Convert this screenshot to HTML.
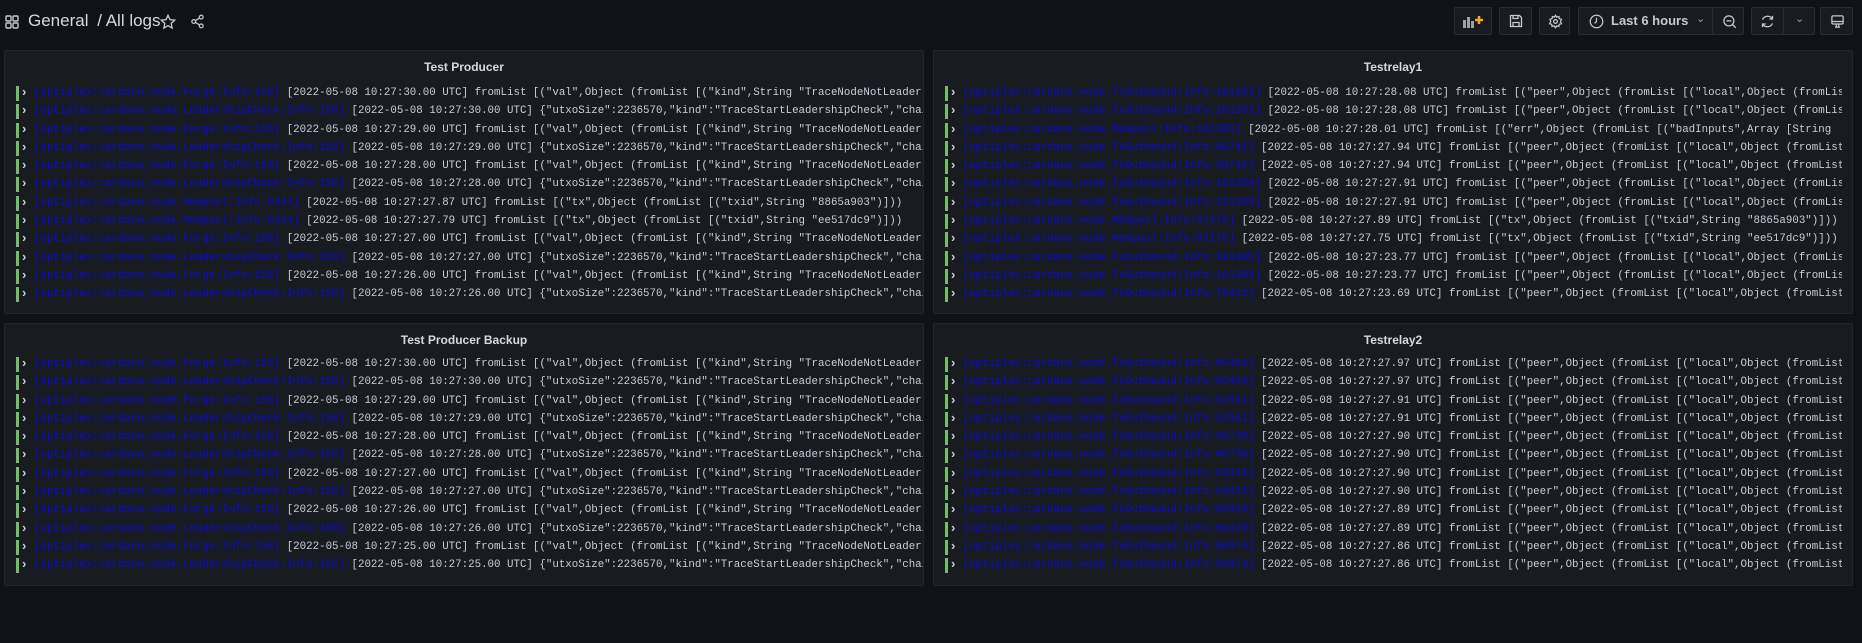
<!DOCTYPE html>
<html><head><meta charset="utf-8"><style>
*{box-sizing:border-box;margin:0;padding:0}
body{width:1862px;height:643px;background:#111217;font-family:"Liberation Sans",sans-serif;color:#ccccdc;overflow:hidden;position:relative}
.hdr{position:absolute;left:0;top:0;width:1862px;height:44px}
.crumb{position:absolute;left:28px;top:11px;font-size:17px;color:#d8d9de}
.btn{position:absolute;top:7px;height:28px;border:1px solid #2a2c31;background:#181b1f;border-radius:2px}
.panel{position:absolute;background:#181b1f;border:1px solid #24262b;border-radius:2px;overflow:hidden}
.title{position:absolute;left:0;right:0;top:9px;text-align:center;font-size:12px;font-weight:bold;color:#d8d9de}
.logs{position:absolute;left:0;top:0;right:0;font-family:"Liberation Mono",monospace;font-size:10.8px;color:#ccccdc}
.r{position:relative;height:18.3px;line-height:18px;padding-left:29px;overflow:hidden;white-space:pre}
.r:before{content:"";position:absolute;left:11px;top:2px;width:3px;height:15px;background:#73bf69}
.r:after{content:"›";position:absolute;left:17px;top:-1px;color:#ccccdc;font-weight:bold;font-family:"Liberation Sans",sans-serif;font-size:13px}
.l{color:#0a0ae0}
</style></head><body>
<div class="hdr">
<svg style="position:absolute;left:5px;top:15px" width="14" height="14" viewBox="0 0 14 14" fill="none" stroke="#c7c9d1" stroke-width="1.4"><rect x="1" y="1" width="5" height="5" rx="1"/><rect x="8" y="1" width="5" height="5" rx="1"/><rect x="1" y="8" width="5" height="5" rx="1"/><rect x="8" y="8" width="5" height="5" rx="1"/></svg>
<div class="crumb">General <span style="margin-left:4px">/ All logs</span></div>
<svg style="position:absolute;left:160px;top:14px" width="16" height="16" viewBox="0 0 24 24" fill="none" stroke="#c7c9d1" stroke-width="2"><path d="M12 2l3 6.5 7 .8-5.2 4.8 1.4 7-6.2-3.6-6.2 3.6 1.4-7L2 9.3l7-.8z"/></svg>
<svg style="position:absolute;left:190px;top:14px" width="15" height="15" viewBox="0 0 24 24" fill="none" stroke="#c7c9d1" stroke-width="2"><circle cx="18" cy="5" r="3"/><circle cx="6" cy="12" r="3"/><circle cx="18" cy="19" r="3"/><path d="M8.6 13.5l6.8 4M15.4 6.5l-6.8 4"/></svg>
<div class="btn" style="left:1454px;width:38px"><svg style="position:absolute;left:8px;top:6px" width="22" height="14" viewBox="0 0 22 14"><rect x="0" y="6" width="3" height="8" fill="#9fa1a7"/><rect x="4" y="3" width="3" height="11" fill="#9fa1a7"/><rect x="8" y="7" width="3" height="7" fill="#9fa1a7"/><path d="M12 6h8M16 2v8" stroke="#f5a623" stroke-width="2.5"/></svg></div>
<div class="btn" style="left:1499px;width:33px"><svg style="position:absolute;left:9px;top:6px" width="14" height="14" viewBox="0 0 14 14" fill="none" stroke="#c7c9d1" stroke-width="1.3"><path d="M1.5 1.5h9l2 2v9h-11z M4 1.5v3h5v-3 M4 12.5v-4h6v4"/></svg></div>
<div class="btn" style="left:1539px;width:31px"><svg style="position:absolute;left:8px;top:6px" width="15" height="15" viewBox="0 0 24 24" fill="none" stroke="#c7c9d1" stroke-width="2"><circle cx="12" cy="12" r="3"/><path d="M12 2l2 3 3.5-1 .5 3.5 3.5 1-1.5 3.5 1.5 3.5-3.5 1-.5 3.5-3.5-1-2 3-2-3-3.5 1-.5-3.5-3.5-1L4.5 12 3 8.5l3.5-1L7 4l3.5 1z"/></svg></div>
<div class="btn" style="left:1578px;width:166px"><svg style="position:absolute;left:10px;top:6px" width="15" height="15" viewBox="0 0 24 24" fill="none" stroke="#c7c9d1" stroke-width="2"><circle cx="12" cy="12" r="10"/><path d="M12 6v6l-3 3"/></svg><span style="position:absolute;left:32px;top:5px;font-size:13px;color:#c7c9d1;font-weight:bold">Last 6 hours</span><span style="position:absolute;left:117px;top:4px;font-size:11px;color:#9fa1a7">&#8964;</span><div style="position:absolute;left:133px;top:0;width:1px;height:26px;background:#2a2c31"></div><svg style="position:absolute;left:143px;top:6px" width="15" height="15" viewBox="0 0 24 24" fill="none" stroke="#c7c9d1" stroke-width="2"><circle cx="11" cy="11" r="8"/><path d="M7 11h8M17 17l5 5"/></svg></div>
<div class="btn" style="left:1751px;width:64px"><svg style="position:absolute;left:8px;top:6px" width="15" height="15" viewBox="0 0 24 24" fill="none" stroke="#c7c9d1" stroke-width="2"><path d="M20 8A9 9 0 0 0 4 9M4 16a9 9 0 0 0 16-1M20 3v5h-5M4 21v-5h5"/></svg><div style="position:absolute;left:31px;top:0;width:1px;height:26px;background:#2a2c31"></div><span style="position:absolute;left:43px;top:4px;font-size:11px;color:#9fa1a7">&#8964;</span></div>
<div class="btn" style="left:1820px;width:33px"><svg style="position:absolute;left:9px;top:6px" width="15" height="15" viewBox="0 0 24 24" fill="none" stroke="#c7c9d1" stroke-width="2"><rect x="3" y="3" width="18" height="13" rx="2"/><path d="M3 12h18M8 21h8M10 16v5M14 16v5"/></svg></div>
</div>

<div class="panel" style="left:4px;top:50px;width:920px;height:264px"><div class="title">Test Producer</div>
<div class="logs" style="top:33px">
<div class="r"><span class="l">[optiplex:cardano.node.Forge:Info:156]</span> [2022-05-08 10:27:30.00 UTC] fromList [("val",Object (fromList [("kind",String "TraceNodeNotLeader"</div>
<div class="r"><span class="l">[optiplex:cardano.node.LeadershipCheck:Info:156]</span> [2022-05-08 10:27:30.00 UTC] {"utxoSize":2236570,"kind":"TraceStartLeadershipCheck","chainDensity"</div>
<div class="r"><span class="l">[optiplex:cardano.node.Forge:Info:156]</span> [2022-05-08 10:27:29.00 UTC] fromList [("val",Object (fromList [("kind",String "TraceNodeNotLeader"</div>
<div class="r"><span class="l">[optiplex:cardano.node.LeadershipCheck:Info:156]</span> [2022-05-08 10:27:29.00 UTC] {"utxoSize":2236570,"kind":"TraceStartLeadershipCheck","chainDensity"</div>
<div class="r"><span class="l">[optiplex:cardano.node.Forge:Info:156]</span> [2022-05-08 10:27:28.00 UTC] fromList [("val",Object (fromList [("kind",String "TraceNodeNotLeader"</div>
<div class="r"><span class="l">[optiplex:cardano.node.LeadershipCheck:Info:156]</span> [2022-05-08 10:27:28.00 UTC] {"utxoSize":2236570,"kind":"TraceStartLeadershipCheck","chainDensity"</div>
<div class="r"><span class="l">[optiplex:cardano.node.Mempool:Info:5344]</span> [2022-05-08 10:27:27.87 UTC] fromList [("tx",Object (fromList [("txid",String "8865a903")]))</div>
<div class="r"><span class="l">[optiplex:cardano.node.Mempool:Info:5344]</span> [2022-05-08 10:27:27.79 UTC] fromList [("tx",Object (fromList [("txid",String "ee517dc9")]))</div>
<div class="r"><span class="l">[optiplex:cardano.node.Forge:Info:156]</span> [2022-05-08 10:27:27.00 UTC] fromList [("val",Object (fromList [("kind",String "TraceNodeNotLeader"</div>
<div class="r"><span class="l">[optiplex:cardano.node.LeadershipCheck:Info:156]</span> [2022-05-08 10:27:27.00 UTC] {"utxoSize":2236570,"kind":"TraceStartLeadershipCheck","chainDensity"</div>
<div class="r"><span class="l">[optiplex:cardano.node.Forge:Info:156]</span> [2022-05-08 10:27:26.00 UTC] fromList [("val",Object (fromList [("kind",String "TraceNodeNotLeader"</div>
<div class="r"><span class="l">[optiplex:cardano.node.LeadershipCheck:Info:156]</span> [2022-05-08 10:27:26.00 UTC] {"utxoSize":2236570,"kind":"TraceStartLeadershipCheck","chainDensity"</div>
</div></div>

<div class="panel" style="left:933px;top:50px;width:920px;height:264px"><div class="title">Testrelay1</div>
<div class="logs" style="top:33px;right:10px">
<div class="r"><span class="l">[optiplex:cardano.node.TxOutbound:Info:101261]</span> [2022-05-08 10:27:28.08 UTC] fromList [("peer",Object (fromList [("local",Object (fromList</div>
<div class="r"><span class="l">[optiplex:cardano.node.TxOutbound:Info:101261]</span> [2022-05-08 10:27:28.08 UTC] fromList [("peer",Object (fromList [("local",Object (fromList</div>
<div class="r"><span class="l">[optiplex:cardano.node.Mempool:Info:101385]</span> [2022-05-08 10:27:28.01 UTC] fromList [("err",Object (fromList [("badInputs",Array [String</div>
<div class="r"><span class="l">[optiplex:cardano.node.TxOutbound:Info:98742]</span> [2022-05-08 10:27:27.94 UTC] fromList [("peer",Object (fromList [("local",Object (fromList</div>
<div class="r"><span class="l">[optiplex:cardano.node.TxOutbound:Info:98742]</span> [2022-05-08 10:27:27.94 UTC] fromList [("peer",Object (fromList [("local",Object (fromList</div>
<div class="r"><span class="l">[optiplex:cardano.node.TxOutbound:Info:101338]</span> [2022-05-08 10:27:27.91 UTC] fromList [("peer",Object (fromList [("local",Object (fromList</div>
<div class="r"><span class="l">[optiplex:cardano.node.TxOutbound:Info:101338]</span> [2022-05-08 10:27:27.91 UTC] fromList [("peer",Object (fromList [("local",Object (fromList</div>
<div class="r"><span class="l">[optiplex:cardano.node.Mempool:Info:67270]</span> [2022-05-08 10:27:27.89 UTC] fromList [("tx",Object (fromList [("txid",String "8865a903")]))</div>
<div class="r"><span class="l">[optiplex:cardano.node.Mempool:Info:67270]</span> [2022-05-08 10:27:27.75 UTC] fromList [("tx",Object (fromList [("txid",String "ee517dc9")]))</div>
<div class="r"><span class="l">[optiplex:cardano.node.TxOutbound:Info:101305]</span> [2022-05-08 10:27:23.77 UTC] fromList [("peer",Object (fromList [("local",Object (fromList</div>
<div class="r"><span class="l">[optiplex:cardano.node.TxOutbound:Info:101305]</span> [2022-05-08 10:27:23.77 UTC] fromList [("peer",Object (fromList [("local",Object (fromList</div>
<div class="r"><span class="l">[optiplex:cardano.node.TxOutbound:Info:78422]</span> [2022-05-08 10:27:23.69 UTC] fromList [("peer",Object (fromList [("local",Object (fromList</div>
</div></div>

<div class="panel" style="left:4px;top:323px;width:920px;height:263px"><div class="title">Test Producer Backup</div>
<div class="logs" style="top:31px">
<div class="r"><span class="l">[optiplex:cardano.node.Forge:Info:156]</span> [2022-05-08 10:27:30.00 UTC] fromList [("val",Object (fromList [("kind",String "TraceNodeNotLeader"</div>
<div class="r"><span class="l">[optiplex:cardano.node.LeadershipCheck:Info:156]</span> [2022-05-08 10:27:30.00 UTC] {"utxoSize":2236570,"kind":"TraceStartLeadershipCheck","chainDensity"</div>
<div class="r"><span class="l">[optiplex:cardano.node.Forge:Info:156]</span> [2022-05-08 10:27:29.00 UTC] fromList [("val",Object (fromList [("kind",String "TraceNodeNotLeader"</div>
<div class="r"><span class="l">[optiplex:cardano.node.LeadershipCheck:Info:156]</span> [2022-05-08 10:27:29.00 UTC] {"utxoSize":2236570,"kind":"TraceStartLeadershipCheck","chainDensity"</div>
<div class="r"><span class="l">[optiplex:cardano.node.Forge:Info:156]</span> [2022-05-08 10:27:28.00 UTC] fromList [("val",Object (fromList [("kind",String "TraceNodeNotLeader"</div>
<div class="r"><span class="l">[optiplex:cardano.node.LeadershipCheck:Info:156]</span> [2022-05-08 10:27:28.00 UTC] {"utxoSize":2236570,"kind":"TraceStartLeadershipCheck","chainDensity"</div>
<div class="r"><span class="l">[optiplex:cardano.node.Forge:Info:156]</span> [2022-05-08 10:27:27.00 UTC] fromList [("val",Object (fromList [("kind",String "TraceNodeNotLeader"</div>
<div class="r"><span class="l">[optiplex:cardano.node.LeadershipCheck:Info:156]</span> [2022-05-08 10:27:27.00 UTC] {"utxoSize":2236570,"kind":"TraceStartLeadershipCheck","chainDensity"</div>
<div class="r"><span class="l">[optiplex:cardano.node.Forge:Info:156]</span> [2022-05-08 10:27:26.00 UTC] fromList [("val",Object (fromList [("kind",String "TraceNodeNotLeader"</div>
<div class="r"><span class="l">[optiplex:cardano.node.LeadershipCheck:Info:156]</span> [2022-05-08 10:27:26.00 UTC] {"utxoSize":2236570,"kind":"TraceStartLeadershipCheck","chainDensity"</div>
<div class="r"><span class="l">[optiplex:cardano.node.Forge:Info:156]</span> [2022-05-08 10:27:25.00 UTC] fromList [("val",Object (fromList [("kind",String "TraceNodeNotLeader"</div>
<div class="r"><span class="l">[optiplex:cardano.node.LeadershipCheck:Info:156]</span> [2022-05-08 10:27:25.00 UTC] {"utxoSize":2236570,"kind":"TraceStartLeadershipCheck","chainDensity"</div>
</div></div>

<div class="panel" style="left:933px;top:323px;width:920px;height:263px"><div class="title">Testrelay2</div>
<div class="logs" style="top:31px;right:10px">
<div class="r"><span class="l">[optiplex:cardano.node.TxOutbound:Info:65483]</span> [2022-05-08 10:27:27.97 UTC] fromList [("peer",Object (fromList [("local",Object (fromList</div>
<div class="r"><span class="l">[optiplex:cardano.node.TxOutbound:Info:65483]</span> [2022-05-08 10:27:27.97 UTC] fromList [("peer",Object (fromList [("local",Object (fromList</div>
<div class="r"><span class="l">[optiplex:cardano.node.TxOutbound:Info:52551]</span> [2022-05-08 10:27:27.91 UTC] fromList [("peer",Object (fromList [("local",Object (fromList</div>
<div class="r"><span class="l">[optiplex:cardano.node.TxOutbound:Info:52551]</span> [2022-05-08 10:27:27.91 UTC] fromList [("peer",Object (fromList [("local",Object (fromList</div>
<div class="r"><span class="l">[optiplex:cardano.node.TxOutbound:Info:60730]</span> [2022-05-08 10:27:27.90 UTC] fromList [("peer",Object (fromList [("local",Object (fromList</div>
<div class="r"><span class="l">[optiplex:cardano.node.TxOutbound:Info:60730]</span> [2022-05-08 10:27:27.90 UTC] fromList [("peer",Object (fromList [("local",Object (fromList</div>
<div class="r"><span class="l">[optiplex:cardano.node.TxOutbound:Info:63415]</span> [2022-05-08 10:27:27.90 UTC] fromList [("peer",Object (fromList [("local",Object (fromList</div>
<div class="r"><span class="l">[optiplex:cardano.node.TxOutbound:Info:63415]</span> [2022-05-08 10:27:27.90 UTC] fromList [("peer",Object (fromList [("local",Object (fromList</div>
<div class="r"><span class="l">[optiplex:cardano.node.TxOutbound:Info:66329]</span> [2022-05-08 10:27:27.89 UTC] fromList [("peer",Object (fromList [("local",Object (fromList</div>
<div class="r"><span class="l">[optiplex:cardano.node.TxOutbound:Info:66329]</span> [2022-05-08 10:27:27.89 UTC] fromList [("peer",Object (fromList [("local",Object (fromList</div>
<div class="r"><span class="l">[optiplex:cardano.node.TxOutbound:Info:50974]</span> [2022-05-08 10:27:27.86 UTC] fromList [("peer",Object (fromList [("local",Object (fromList</div>
<div class="r"><span class="l">[optiplex:cardano.node.TxOutbound:Info:50974]</span> [2022-05-08 10:27:27.86 UTC] fromList [("peer",Object (fromList [("local",Object (fromList</div>
</div></div>
</body></html>
